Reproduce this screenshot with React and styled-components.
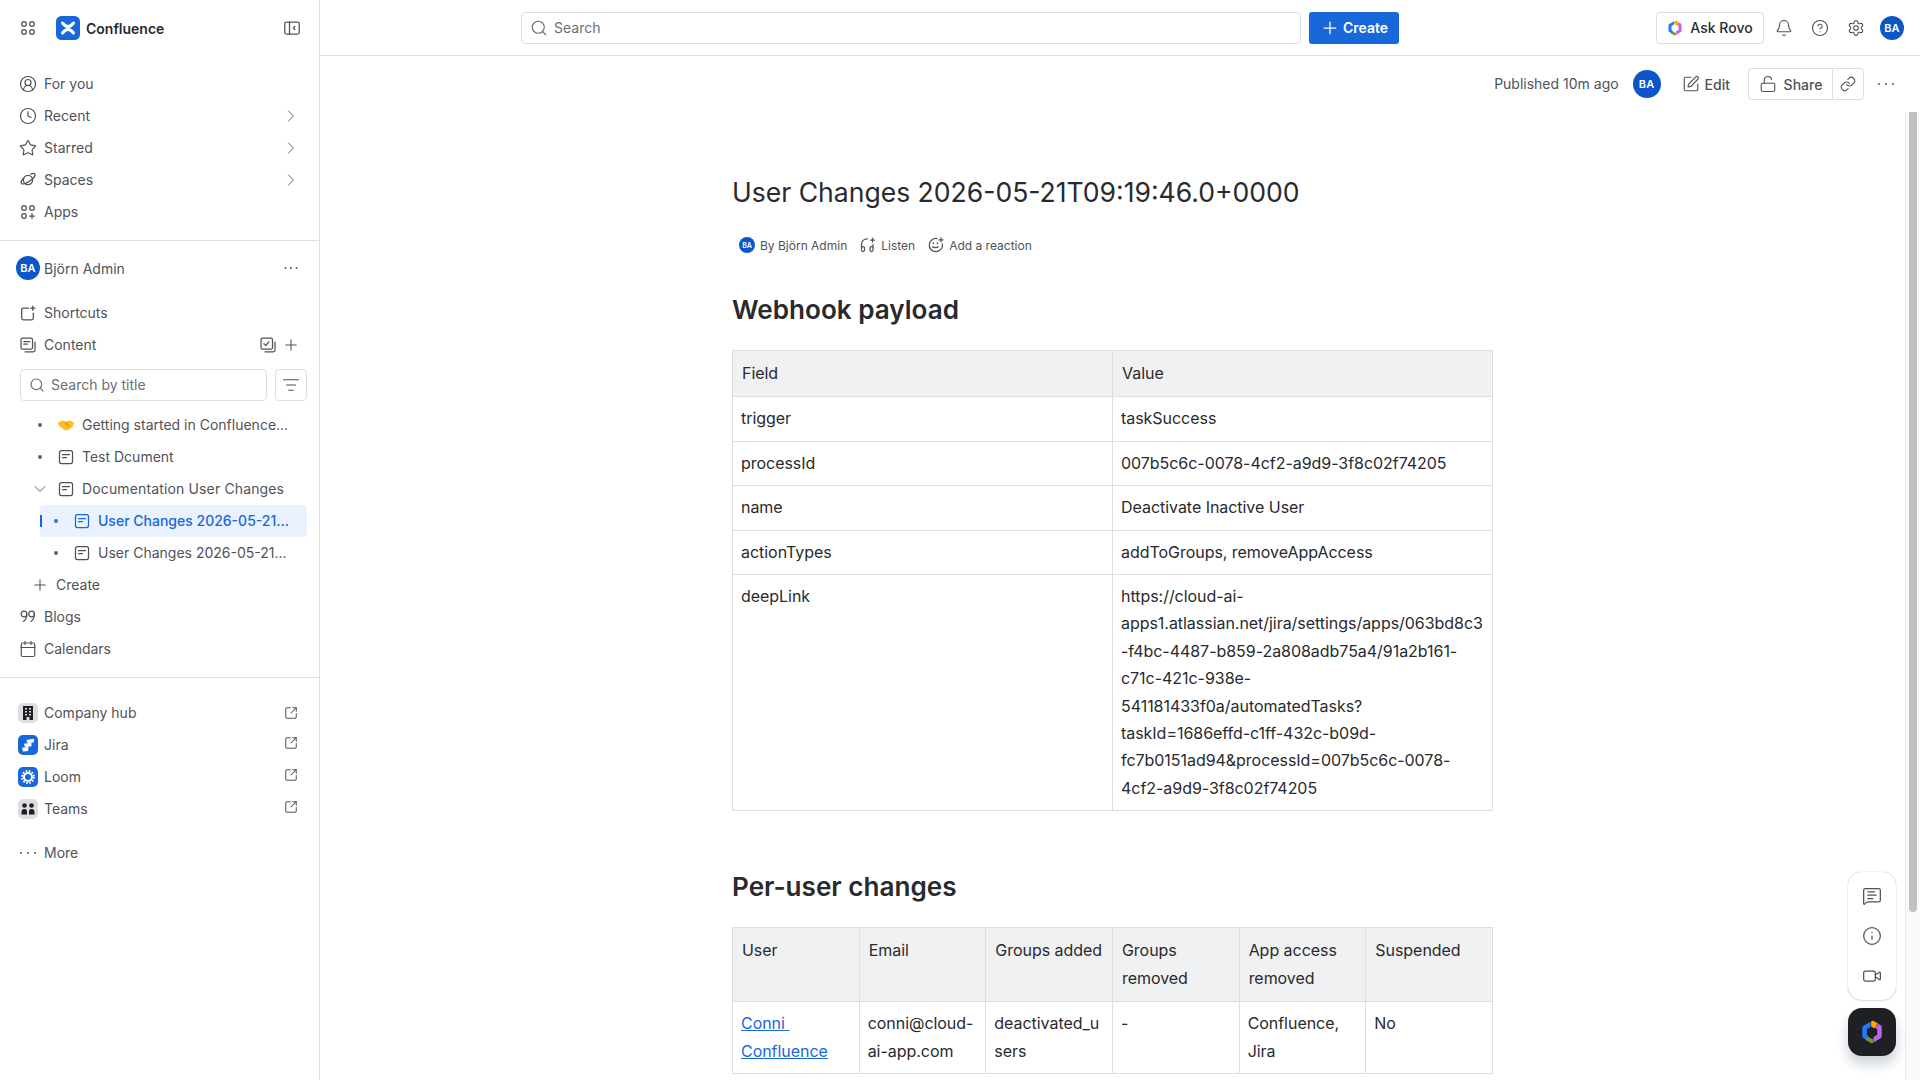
import styled, { createGlobalStyle } from "styled-components";
import {
  Bell,
  Calendar,
  ChevronDown,
  ChevronRight,
  CircleHelp,
  CircleUserRound,
  Clock,
  Info,
  Link as LinkIcon,
  ListFilter,
  LockOpen,
  MessageSquareText,
  Plus,
  Search,
  Settings,
  SquareArrowOutUpRight,
  SquarePen,
  Star,
  Video,
} from "lucide-react";

const GlobalStyle = createGlobalStyle`
  html, body, #root { margin: 0; padding: 0; height: 100%; }
  body {
    font-family: "Inter", "Liberation Sans", sans-serif;
    color: #292a2e;
    background: #fff;
    overflow: hidden;
  }
  * { box-sizing: border-box; }
`;

// small 16px drawings the icon packages have no match for
const Glyph = ({ children, size = 16 }) => (
  <svg
    width={size}
    height={size}
    viewBox="0 0 16 16"
    fill="none"
    stroke="currentColor"
    strokeWidth="1.25"
    strokeLinecap="round"
    strokeLinejoin="round"
    style={{ flexShrink: 0 }}
  >
    {children}
  </svg>
);

const AppSwitcher = () => (
  <Glyph>
    <circle cx="4" cy="4" r="2.3" />
    <circle cx="12" cy="4" r="2.3" />
    <circle cx="4" cy="12" r="2.3" />
    <circle cx="12" cy="12" r="2.3" />
  </Glyph>
);

const AppsIcon = () => (
  <Glyph>
    <circle cx="4" cy="4" r="2.3" />
    <circle cx="12" cy="4" r="2.3" />
    <circle cx="4" cy="12" r="2.3" />
    <path d="M12 9.5v5M9.5 12h5" />
  </Glyph>
);

const SidebarToggle = () => (
  <Glyph>
    <rect x="0.8" y="2" width="14.4" height="12" rx="1.5" />
    <path d="M5.5 2v12M10.8 6.5 9.3 8l1.5 1.500" />
  </Glyph>
);

const Planet = () => (
  <Glyph>
    <circle cx="8" cy="8" r="4.6" />
    <path d="M4.2 5.6C2 7.6.6 10 1.3 11.3c1 1.5 4.8.4 8.5-2.2 3.6-2.6 5.900-5.600 5-7-.6-.9-2.200-.9-4.200-.1" />
  </Glyph>
);

const ShortcutIcon = () => (
  <Glyph>
    <path d="M8.500 3H3.200c-.9 0-1.500.6-1.500 1.500v8.800c0 .9.600 1.500 1.500 1.500h8.600c.9 0 1.500-.6 1.500-1.500V8" />
    <path d="M12.800 1v4.400M10.600 3.200H15" />
  </Glyph>
);

const ContentIcon = () => (
  <Glyph>
    <rect x="1" y="1.2" width="11.500" height="11" rx="1.500" />
    <path d="M3.800 4.500h6M3.800 7h3.600M15 5v8c0 1-.7 1.800-1.800 1.800H5" />
  </Glyph>
);

const TasksIcon = () => (
  <Glyph>
    <rect x="1" y="1.2" width="11.500" height="11" rx="1.500" />
    <path d="m4 6.800 1.800 1.800 3-3.600M15 5v8c0 1-.7 1.800-1.800 1.800H5" />
  </Glyph>
);

const PageIcon = () => (
  <Glyph>
    <rect x="1.500" y="1.500" width="13" height="13" rx="2" />
    <path d="M4.500 5.500h7M4.500 8.500h4" />
  </Glyph>
);

const QuoteIcon = () => (
  <Glyph>
    <circle cx="4" cy="5" r="2.800" />
    <path d="M6.800 5c0 3.500-1.200 6-3.400 7.500" />
    <circle cx="11.600" cy="5" r="2.800" />
    <path d="M14.400 5c0 3.500-1.200 6-3.400 7.500" />
  </Glyph>
);

const ListenIcon = () => (
  <Glyph>
    <path d="M1.500 10V7.500c0-3.200 2.300-5.600 6-5.600" />
    <rect x="1.500" y="9.500" width="3" height="5" rx="1.500" />
    <rect x="10" y="9.500" width="3" height="5" rx="1.500" />
    <path d="M13 10V7.500" />
    <path d="M12.500 1v4M10.500 3h4" />
  </Glyph>
);

const ReactionIcon = () => (
  <Glyph>
    <path d="M9 1.600A6.600 6.600 0 1 0 14.400 7" />
    <path d="M4.800 9.600c.8 1.500 4.600 1.500 5.400 0" />
    <path d="M5.400 6.200h0M9.400 6.200h0" strokeWidth="1.800" />
    <path d="M13 .8v4M11 2.800h4" />
  </Glyph>
);

const Dots = ({ $wide }) => (
  <svg width="16" height="16" viewBox="0 0 16 16" fill="currentColor" style={{ flexShrink: 0 }}>
    <circle cx={$wide ? 1 : 2.5} cy="8" r="1" />
    <circle cx="8" cy="8" r="1" />
    <circle cx={$wide ? 15 : 13.500} cy="8" r="1" />
  </svg>
);

const ConfluenceLogo = () => (
  <svg width="24" height="24" viewBox="0 0 24 24" style={{ flexShrink: 0 }}>
    <rect width="24" height="24" rx="5.500" fill="#1868db" />
    <path
      d="M6.500 7c2 2.600 3.500 3.600 5.500 3.600S15.500 9.600 17.500 7M6.500 17c2-2.600 3.500-3.600 5.500-3.600s3.500 1 5.500 3.600"
      fill="none"
      stroke="#fff"
      strokeWidth="3"
      strokeLinecap="round"
    />
  </svg>
);

const RovoLogo = ({ size = 16 }) => (
  <svg width={size} height={size} viewBox="0 0 16 16" style={{ flexShrink: 0 }}>
    <path d="M7 1.200 2.300 3.900Q1.500 4.400 1.500 5.300V10.700Q1.500 11.600 2.300 12.100L5.500 14V10.500L4.500 9.900V6.100L7 4.600Z" fill="#1d7afc" />
    <path d="M12.300 2.600 13.700 3.400Q14.500 3.900 14.500 4.800V10.700Q14.500 11.600 13.700 12.100L9 15V11.300L11.500 9.900V6.100L9.800 5.100Z" fill="#bf63f3" />
    <path d="M7.400 1 8 .6Q8.500 .4 9 .6L12 2.400 9.500 5.500 7.400 4.300Z" fill="#ffa900" />
    <path d="M5 11 8.800 13V15.100L8.200 15.400Q7.700 15.600 7.200 15.300L3.800 13.300Z" fill="#6a9a23" />
  </svg>
);

const Handshake = () => (
  <svg width="16" height="16" viewBox="0 0 16 16" style={{ flexShrink: 0 }}>
    <path d="M0 5.500 4 3.500l4 1 4-1 4 2-1 4-5.500 4-3.500-.5-2-2L1 9z" fill="#fbbf24" />
    <path d="M6 6.500 8.500 5l3.500 4-1.500 1.500z" fill="#f59e0b" />
  </svg>
);

const BuildingIcon = () => (
  <svg width="12" height="14" viewBox="0 0 12 14">
    <path
      fillRule="evenodd"
      d="M1 0h10v14H7.500v-3h-3v3H1zM3 2v1.500h2V2zm4 0v1.500h2V2zM3 5v1.500h2V5zm4 0v1.500h2V5zM3 8v1.500h2V8zm4 0v1.500h2V8z"
      fill="#1e1f21"
    />
  </svg>
);

const JiraIcon = () => (
  <svg width="14" height="14" viewBox="0 0 14 14" fill="#fff">
    <path d="M5.500 2 13 .8V4.200L6.500 5.200Z" />
    <path d="M3 5.800 10.500 4.800V8.200L4 9.200Z" />
    <path d="M1 9.800 7.500 9 7 13 2 13.500Z" />
  </svg>
);

const LoomIcon = () => (
  <svg width="14" height="14" viewBox="0 0 14 14">
    <circle cx="7" cy="7" r="4" fill="none" stroke="#fff" strokeWidth="2" />
    <circle cx="7" cy="7" r="6" fill="none" stroke="#fff" strokeWidth="2" strokeDasharray="1.600 1.540" />
  </svg>
);

const TeamsIcon = () => (
  <svg width="14" height="12" viewBox="0 0 14 12" fill="#1e1f21">
    <circle cx="3.500" cy="2.500" r="2.300" />
    <circle cx="10.500" cy="2.500" r="2.300" />
    <path d="M.5 11.500V9c0-2 1-3 3-3s2.500 1 2.500 3v2.500zM8 11.500V9c0-2 .5-3 2.500-3s3 1 3 3v2.500z" />
  </svg>
);

const App = () => {
  return (
    <>
      <GlobalStyle />
      <Shell>
        <Sidebar>
          <BrandBar>
            <IconSlot>
              <AppSwitcher />
            </IconSlot>
            <ConfluenceLogo />
            <BrandName>Confluence</BrandName>
            <ToggleSlot>
              <SidebarToggle />
            </ToggleSlot>
          </BrandBar>

          <Section>
            <NavRow>
              <CircleUserRound size={18} strokeWidth={1.6} />
              <RowLabel>For you</RowLabel>
            </NavRow>
            <NavRow>
              <Clock size={18} strokeWidth={1.6} />
              <RowLabel>Recent</RowLabel>
              <RowEnd>
                <ChevronRight size={20} strokeWidth={1.1} />
              </RowEnd>
            </NavRow>
            <NavRow>
              <Star size={18} strokeWidth={1.6} />
              <RowLabel>Starred</RowLabel>
              <RowEnd>
                <ChevronRight size={20} strokeWidth={1.1} />
              </RowEnd>
            </NavRow>
            <NavRow>
              <Planet />
              <RowLabel>Spaces</RowLabel>
              <RowEnd>
                <ChevronRight size={20} strokeWidth={1.1} />
              </RowEnd>
            </NavRow>
            <NavRow>
              <AppsIcon />
              <RowLabel>Apps</RowLabel>
            </NavRow>
          </Section>

          <SpaceSection>
            <SpaceRow>
              <Avatar $size={24}>BA</Avatar>
              <RowLabel>Björn Admin</RowLabel>
              <SpaceMenu>
                <Dots />
              </SpaceMenu>
            </SpaceRow>
            <NavRow>
              <ShortcutIcon />
              <RowLabel>Shortcuts</RowLabel>
            </NavRow>
            <NavRow>
              <ContentIcon />
              <RowLabel>Content</RowLabel>
              <ContentActions>
                <TasksIcon />
                <Plus size={18} strokeWidth={1.4} />
              </ContentActions>
            </NavRow>
            <FilterRow>
              <TitleSearch>
                <Search size={16} strokeWidth={1.75} />
                <span>Search by title</span>
              </TitleSearch>
              <FilterButton>
                <ListFilter size={18} strokeWidth={1.5} />
              </FilterButton>
            </FilterRow>
            <TreeRow>
              <Bullet />
              <Handshake />
              <TreeLabel>Getting started in Confluence...</TreeLabel>
            </TreeRow>
            <TreeRow>
              <Bullet />
              <PageIcon />
              <TreeLabel>Test Dcument</TreeLabel>
            </TreeRow>
            <TreeRow>
              <Caret>
                <ChevronDown size={20} strokeWidth={1.1} />
              </Caret>
              <PageIcon />
              <TreeLabel $spread>Documentation User Changes</TreeLabel>
            </TreeRow>
            <TreeRow $child $selected>
              <Bullet />
              <PageIcon />
              <TreeLabel>User Changes 2026-05-21...</TreeLabel>
            </TreeRow>
            <TreeRow $child>
              <Bullet />
              <PageIcon />
              <TreeLabel>User Changes 2026-05-21...</TreeLabel>
            </TreeRow>
            <CreateRow>
              <Plus size={18} strokeWidth={1.4} />
              <RowLabel>Create</RowLabel>
            </CreateRow>
            <NavRow>
              <QuoteIcon />
              <RowLabel>Blogs</RowLabel>
            </NavRow>
            <NavRow>
              <Calendar size={18} strokeWidth={1.6} />
              <RowLabel>Calendars</RowLabel>
            </NavRow>
          </SpaceSection>

          <AppsSection>
            <AppRow>
              <AppTile>
                <BuildingIcon />
              </AppTile>
              <RowLabel>Company hub</RowLabel>
              <OutLink>
                <SquareArrowOutUpRight size={14} strokeWidth={1.75} />
              </OutLink>
            </AppRow>
            <AppRow>
              <AppTile $blue>
                <JiraIcon />
              </AppTile>
              <RowLabel>Jira</RowLabel>
              <OutLink $lift>
                <SquareArrowOutUpRight size={14} strokeWidth={1.75} />
              </OutLink>
            </AppRow>
            <AppRow>
              <AppTile $blue>
                <LoomIcon />
              </AppTile>
              <RowLabel>Loom</RowLabel>
              <OutLink $lift>
                <SquareArrowOutUpRight size={14} strokeWidth={1.75} />
              </OutLink>
            </AppRow>
            <AppRow>
              <AppTile>
                <TeamsIcon />
              </AppTile>
              <RowLabel>Teams</RowLabel>
              <OutLink $lift>
                <SquareArrowOutUpRight size={14} strokeWidth={1.75} />
              </OutLink>
            </AppRow>
            <MoreRow>
              <Dots $wide />
              <RowLabel>More</RowLabel>
            </MoreRow>
          </AppsSection>
        </Sidebar>

        <Main>
          <TopBar>
            <SearchBox>
              <Search size={18} strokeWidth={1.5} />
              <span>Search</span>
            </SearchBox>
            <CreateButton>
              <Plus size={20} strokeWidth={1.5} />
              Create
            </CreateButton>
            <TopActions>
              <RovoButton>
                <RovoLogo />
                Ask Rovo
              </RovoButton>
              <TopIcons>
                <Bell size={18} strokeWidth={1.5} />
                <CircleHelp size={18} strokeWidth={1.5} />
                <Settings size={18} strokeWidth={1.5} />
              </TopIcons>
              <TopAvatar $size={24}>BA</TopAvatar>
            </TopActions>
          </TopBar>

          <PageBar>
            <Published>Published 10m ago</Published>
            <Avatar $size={28}>BA</Avatar>
            <EditButton>
              <SquarePen size={18} strokeWidth={1.5} />
              Edit
            </EditButton>
            <ShareGroup>
              <ShareButton>
                <LockOpen size={18} strokeWidth={1.5} />
                Share
              </ShareButton>
              <CopyLink>
                <LinkIcon size={16} strokeWidth={1.6} />
              </CopyLink>
            </ShareGroup>
            <PageMore>
              <Dots $wide />
            </PageMore>
          </PageBar>

          <Scroller>
            <Article>
              <Title>User Changes 2026-05-21T09:19:46.0+0000</Title>
              <Byline>
                <BylineItem>
                  <SmallAvatar>BA</SmallAvatar>
                  By Björn Admin
                </BylineItem>
                <BylineItem>
                  <ListenIcon />
                  Listen
                </BylineItem>
                <BylineItem>
                  <ReactionIcon />
                  Add a reaction
                </BylineItem>
              </Byline>

              <Heading>Webhook payload</Heading>
              <DataTable>
                <thead>
                  <tr>
                    <Th>Field</Th>
                    <Th>Value</Th>
                  </tr>
                </thead>
                <tbody>
                  <tr>
                    <Td>trigger</Td>
                    <Td>taskSuccess</Td>
                  </tr>
                  <tr>
                    <Td>processId</Td>
                    <Td>007b5c6c-0078-4cf2-a9d9-3f8c02f74205</Td>
                  </tr>
                  <tr>
                    <Td>name</Td>
                    <Td>Deactivate Inactive User</Td>
                  </tr>
                  <tr>
                    <Td>actionTypes</Td>
                    <Td>addToGroups, removeAppAccess</Td>
                  </tr>
                  <tr>
                    <Td>deepLink</Td>
                    <Td>
                      https://cloud-ai-apps1.atlassian.net/jira/settings/apps/063bd8c3-f4bc-4487-b859-2a808adb75a4/91a2b161-c71c-421c-938e-541181433f0a/automatedTasks?taskId=1686effd-c1ff-432c-b09d-fc7b0151ad94&processId=007b5c6c-0078-4cf2-a9d9-3f8c02f74205
                    </Td>
                  </tr>
                </tbody>
              </DataTable>

              <SecondHeading>Per-user changes</SecondHeading>
              <DataTable>
                <thead>
                  <tr>
                    <Th>User</Th>
                    <Th>Email</Th>
                    <Th>Groups added</Th>
                    <Th>Groups removed</Th>
                    <Th>App access removed</Th>
                    <Th>Suspended</Th>
                  </tr>
                </thead>
                <tbody>
                  <tr>
                    <Td>
                      <UserLink href="#">Conni{"\u00A0 "}Confluence</UserLink>
                    </Td>
                    <Td>conni@cloud-ai-app.com</Td>
                    <Td>deactivated_users</Td>
                    <Td>-</Td>
                    <Td>Confluence, Jira</Td>
                    <Td>No</Td>
                  </tr>
                </tbody>
              </DataTable>
            </Article>
          </Scroller>

          <ScrollTrack>
            <ScrollThumb />
          </ScrollTrack>

          <SideTools>
            <ToolButton>
              <MessageSquareText size={20} strokeWidth={1.5} />
            </ToolButton>
            <ToolButton>
              <Info size={20} strokeWidth={1.5} />
            </ToolButton>
            <ToolButton>
              <Video size={20} strokeWidth={1.5} />
            </ToolButton>
          </SideTools>
          <RovoFab>
            <RovoLogo size={24} />
          </RovoFab>
        </Main>
      </Shell>
    </>
  );
};

export default App;

const Shell = styled.div`
  display: grid;
  grid-template-columns: 320px 1fr;
  height: 100vh;
  overflow: hidden;
`;

const Sidebar = styled.aside`
  border-right: 1px solid #dddee1;
  display: flex;
  flex-direction: column;
  font-size: 14px;
  color: #505258;
  overflow: hidden;
`;

const BrandBar = styled.div`
  height: 56px;
  display: flex;
  align-items: center;
  padding-left: 20px;
  flex-shrink: 0;
`;

const IconSlot = styled.div`
  width: 36px;
  display: flex;
`;

const BrandName = styled.span`
  margin-left: 6px;
  font-weight: 600;
  color: #292a2e;
`;

const ToggleSlot = styled.div`
  margin-left: auto;
  margin-right: 19px;
  display: flex;
`;

const Section = styled.nav`
  padding: 12px 0;
  border-bottom: 1px solid #dddee1;
`;

const SpaceSection = styled(Section)`
  padding: 11px 0 12px;
`;

const AppsSection = styled.nav`
  padding-top: 19px;
`;

const NavRow = styled.div`
  height: 32px;
  display: flex;
  align-items: center;
  gap: 8px;
  padding: 0 20px;

  > svg.lucide {
    margin: 0 -1px;
    flex-shrink: 0;
  }
`;

const RowLabel = styled.span`
  white-space: nowrap;
  margin-bottom: 2px;
`;

const SpaceRow = styled(NavRow)`
  padding-left: 16px;
  gap: 4px;
  margin-bottom: 13px;

  > ${RowLabel} {
    margin-bottom: 0;
  }
`;

const RowEnd = styled.span`
  margin-left: auto;
  margin-right: -2px;
  display: flex;
`;

const SpaceMenu = styled.span`
  margin-left: auto;
  display: flex;
`;

const ContentActions = styled.span`
  margin-left: auto;
  margin-right: -1px;
  display: flex;
  align-items: center;
  gap: 6px;
`;

const FilterRow = styled.div`
  display: flex;
  gap: 8px;
  padding: 8px 12px 8px 20px;
`;

const TitleSearch = styled.div`
  flex: 1;
  height: 32px;
  border: 1px solid #dddee1;
  border-radius: 4px;
  display: flex;
  align-items: center;
  gap: 6px;
  padding: 0 8px;
  color: #6b6e76;

  span {
    margin-bottom: 2px;
  }
`;

const FilterButton = styled.div`
  width: 32px;
  height: 32px;
  border: 1px solid #dddee1;
  border-radius: 4px;
  display: flex;
  align-items: center;
  justify-content: center;
`;

const TreeRow = styled.div`
  height: 32px;
  display: flex;
  align-items: center;
  gap: 8px;
  margin: 0 12px 0 ${(p) => (p.$child ? "40px" : "33px")};
  padding-left: ${(p) => (p.$child ? "9px" : "0")};
  border-radius: 4px;
  position: relative;
  font-weight: ${(p) => (p.$selected ? 500 : 400)};
  color: ${(p) => (p.$selected ? "#1868db" : "#505258")};
  background: ${(p) => (p.$selected ? "#e9f2fe" : "transparent")};

  ${(p) =>
    p.$selected &&
    `&::before {
      content: "";
      position: absolute;
      left: 0;
      top: 10px;
      width: 2px;
      height: 12px;
      background: #1868db;
    }`}
`;

const Bullet = styled.span`
  width: 14px;
  height: 14px;
  margin-right: 3px;
  flex-shrink: 0;
  display: flex;
  align-items: center;
  justify-content: center;

  &::after {
    content: "";
    width: 4px;
    height: 4px;
    border-radius: 50%;
    background: currentColor;
    opacity: 0.9;
  }
`;

const Caret = styled.span`
  width: 14px;
  height: 14px;
  margin-right: 3px;
  flex-shrink: 0;
  display: flex;
  align-items: center;
  justify-content: center;

  svg {
    flex-shrink: 0;
  }
`;

const TreeLabel = styled.span`
  white-space: nowrap;
  margin-bottom: 2px;
  letter-spacing: ${(p) => (p.$spread ? "0.14px" : "0")};
`;

const CreateRow = styled(NavRow)`
  padding-left: 32px;
`;

const AppRow = styled(NavRow)`
  padding-left: 18px;
  gap: 6px;
`;

const AppTile = styled.span`
  width: 20px;
  height: 20px;
  border-radius: 5px;
  display: flex;
  align-items: center;
  justify-content: center;
  flex-shrink: 0;
  background: ${(p) => (p.$blue ? "#1868db" : "#dddee1")};
`;

const OutLink = styled.span`
  margin-left: auto;
  margin-right: 1px;
  display: flex;
  margin-bottom: ${(p) => (p.$lift ? "4px" : "0")};
`;

const MoreRow = styled(NavRow)`
  margin-top: 12px;
`;

const Avatar = styled.span`
  width: ${(p) => p.$size}px;
  height: ${(p) => p.$size}px;
  border-radius: 50%;
  background: #0c56c9;
  color: #fff;
  font-size: 11px;
  font-weight: 600;
  letter-spacing: 0.2px;
  display: flex;
  align-items: center;
  justify-content: center;
  flex-shrink: 0;
`;

const SmallAvatar = styled(Avatar)`
  width: 16px;
  height: 16px;
  font-size: 7px;
  letter-spacing: 0;
`;

const TopAvatar = styled(Avatar)`
  margin-left: 4px;
`;

const Main = styled.main`
  display: flex;
  flex-direction: column;
  min-width: 0;
  height: 100vh;
  position: relative;
`;

const TopBar = styled.header`
  height: 56px;
  flex-shrink: 0;
  border-bottom: 1px solid #dddee1;
  display: flex;
  align-items: center;
  gap: 8px;
  padding: 0 16px 0 201px;
`;

const SearchBox = styled.div`
  width: 780px;
  height: 32px;
  border: 1px solid #dddee1;
  border-radius: 4px;
  display: flex;
  align-items: center;
  gap: 6px;
  padding: 0 8px;
  font-size: 14px;
  color: #6b6e76;
`;

const CreateButton = styled.button`
  width: 90px;
  height: 32px;
  border: 0;
  border-radius: 3px;
  background: #1868db;
  color: #fff;
  font: 600 14px "Inter", sans-serif;
  display: flex;
  align-items: center;
  justify-content: center;
  gap: 3px;
`;

const TopActions = styled.div`
  margin-left: auto;
  display: flex;
  align-items: center;
  gap: 11px;
`;

const RovoButton = styled.button`
  height: 32px;
  width: 108px;
  border: 1px solid #dddee1;
  border-radius: 4px;
  background: #fff;
  color: #292a2e;
  font: 500 14px "Inter", sans-serif;
  display: flex;
  align-items: center;
  justify-content: center;
  gap: 7px;
`;

const TopIcons = styled.div`
  display: flex;
  gap: 18px;
  color: #505258;
`;

const PageBar = styled.div`
  height: 56px;
  flex-shrink: 0;
  display: flex;
  align-items: center;
  justify-content: flex-end;
  padding-right: 26px;
  font-size: 14px;
  color: #505258;
`;

const Published = styled.span`
  margin: 0 14px 2px 0;
`;

const EditButton = styled.span`
  display: flex;
  align-items: center;
  gap: 5px;
  margin: 0 18px 0 21px;
  font-weight: 500;
`;

const ShareGroup = styled.div`
  height: 32px;
  display: flex;
  border: 1px solid #dddee1;
  border-radius: 4px;
`;

const ShareButton = styled.span`
  width: 84px;
  display: flex;
  align-items: center;
  justify-content: center;
  gap: 7px;
  font-weight: 500;
  border-right: 1px solid #dddee1;
`;

const CopyLink = styled.span`
  width: 30px;
  display: flex;
  align-items: center;
  justify-content: center;
`;

const PageMore = styled.span`
  margin-left: 14px;
  display: flex;
`;

const Scroller = styled.div`
  flex: 1;
  min-height: 0;
  overflow: hidden;
  padding-right: 15px;
`;

const Article = styled.article`
  width: 761px;
  margin: 0 auto;
  padding-top: 58px;
`;

const Title = styled.h1`
  margin: 0;
  font-size: 26.55px;
  line-height: 44px;
  font-weight: 400;
  color: #292a2e;
`;

const Byline = styled.div`
  display: flex;
  align-items: center;
  height: 20px;
  margin-top: 21px;
  padding-left: 7px;
  gap: 13px;
  font-size: 12px;
  color: #505258;
`;

const BylineItem = styled.span`
  display: flex;
  align-items: center;
  gap: 5px;
`;

const Heading = styled.h2`
  margin: 33px 0 0;
  font-size: 26.1px;
  line-height: 44px;
  font-weight: 600;
  color: #292a2e;
`;

const SecondHeading = styled(Heading)`
  margin-top: 54px;
`;

const DataTable = styled.table`
  width: 100%;
  margin-top: 18px;
  table-layout: fixed;
  border-collapse: collapse;
  font-size: 16px;
  line-height: 27.4px;
  letter-spacing: -0.04px;
  color: #292a2e;
`;

const Th = styled.th`
  border: 1px solid #dddee1;
  background: #f0f1f2;
  padding: 9px;
  text-align: left;
  vertical-align: top;
  font-weight: 400;
`;

const Td = styled.td`
  border: 1px solid #dddee1;
  padding: 8px;
  vertical-align: top;
  overflow-wrap: break-word;
`;

const UserLink = styled.a`
  color: #1868db;
  text-decoration: underline;
`;

const ScrollTrack = styled.div`
  position: absolute;
  top: 112px;
  right: 0;
  bottom: 0;
  width: 15px;
  background: #fafafa;
  border-left: 1px solid #ebebeb;
  padding-left: 3px;
`;

const ScrollThumb = styled.div`
  width: 8px;
  height: 800px;
  background: #c1c1c1;
  border-radius: 0 0 4px 4px;
`;

const SideTools = styled.div`
  position: absolute;
  right: 24px;
  bottom: 80px;
  width: 48px;
  height: 128px;
  border-radius: 14px;
  background: #fff;
  box-shadow: 0 0 1px rgba(9, 30, 66, 0.4), 0 1px 2px rgba(9, 30, 66, 0.12);
  display: flex;
  flex-direction: column;
  align-items: center;
  justify-content: space-around;
  padding: 4px 0;
  color: #505258;
`;

const ToolButton = styled.span`
  display: flex;
`;

const RovoFab = styled.div`
  position: absolute;
  right: 24px;
  bottom: 24px;
  width: 48px;
  height: 48px;
  border-radius: 14px;
  background: #1f2023;
  box-shadow: 0 8px 12px rgba(9, 30, 66, 0.2);
  display: flex;
  align-items: center;
  justify-content: center;
`;
